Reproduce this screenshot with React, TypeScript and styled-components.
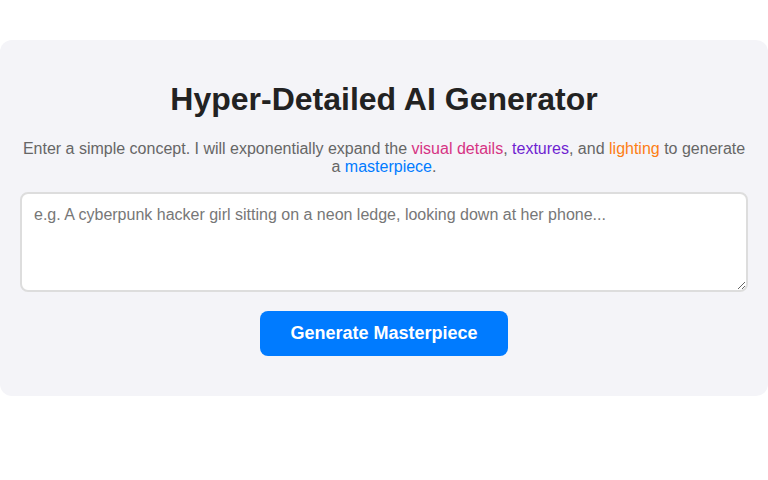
import React, { useState } from 'react';
import styled, { createGlobalStyle } from 'styled-components';

const GlobalStyle = createGlobalStyle`
  body {
    margin: 0;
    background: #fff;
    font-family: "Liberation Sans", Arial, sans-serif;
  }
`;

const App: React.FC = () => {
  const [concept, setConcept] = useState<string>('');

  return (
    <>
      <GlobalStyle />
      <Card>
        <Title>Hyper-Detailed AI Generator</Title>
        <Subtitle>
          Enter a simple concept. I will exponentially expand the{' '}
          <Accent color="#d63384">visual details</Accent>, <Accent color="#6f1fd1">textures</Accent>, and{' '}
          <Accent color="#fd7e14">lighting</Accent> to generate a <Accent color="#007bff">masterpiece</Accent>.
        </Subtitle>
        <ConceptInput
          placeholder="e.g. A cyberpunk hacker girl sitting on a neon ledge, looking down at her phone..."
          value={concept}
          onChange={(e) => setConcept(e.target.value)}
        />
        <GenerateButton>Generate Masterpiece</GenerateButton>
      </Card>
    </>
  );
};

const Card = styled.div`
  max-width: 800px;
  margin: 40px auto;
  padding: 40px 20px;
  background: #f4f4f8;
  border-radius: 12px;
  text-align: center;
  box-sizing: border-box;
`;

const Title = styled.h1`
  margin: 0 0 21px;
  font-size: 32px;
  line-height: 39px;
  font-weight: 700;
  color: #222;
`;

const Subtitle = styled.p`
  margin: 0 0 15px;
  font-size: 16px;
  line-height: 1.15;
  color: #666;
`;

const Accent = styled.span<{ color: string }>`
  color: ${(props) => props.color};
`;

const ConceptInput = styled.textarea`
  display: block;
  width: 100%;
  height: 100px;
  box-sizing: border-box;
  padding: 12px;
  border: 2px solid #ddd;
  border-radius: 8px;
  background: #fff;
  font-family: "Liberation Sans", Arial, sans-serif;
  font-size: 16px;
  color: #333;
  margin: 0 0 19px;
  &::placeholder {
    color: #777;
  }
`;

const GenerateButton = styled.button`
  padding: 12px 30px;
  border: none;
  border-radius: 8px;
  background: #007bff;
  color: #fff;
  font-family: "Liberation Sans", Arial, sans-serif;
  font-size: 18px;
  font-weight: 700;
  cursor: pointer;
`;

export default App;
